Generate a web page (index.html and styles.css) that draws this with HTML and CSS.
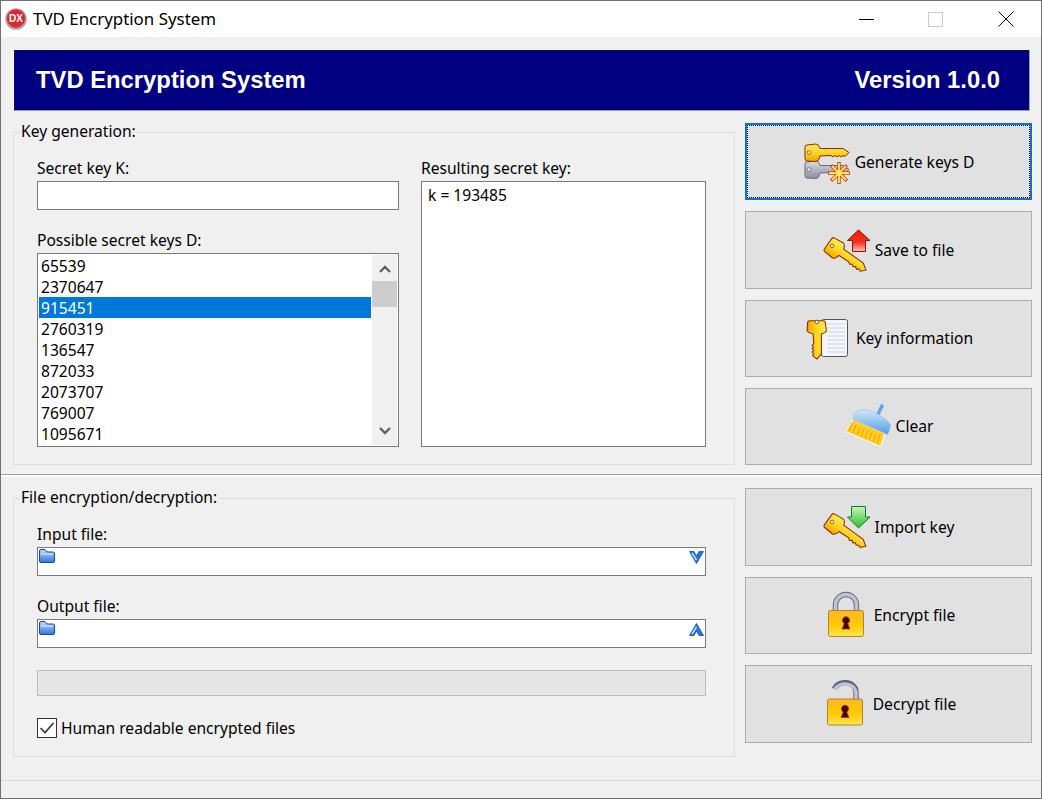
FILE: index.html
```html
<!DOCTYPE html>
<html lang="en">
<head>
  <meta charset="UTF-8" />
  <title>TVD Encryption System</title>
  <link rel="stylesheet" href="styles.css">
</head>
<body>
  <svg class="defs" aria-hidden="true">
    <defs>
      <linearGradient id="gold" x1="0" y1="0" x2="0" y2="1">
        <stop offset="0" stop-color="#ffec5c" />
        <stop offset="0.55" stop-color="#ffd21a" />
        <stop offset="1" stop-color="#f2a200" />
      </linearGradient>
      <linearGradient id="steel" x1="0" y1="0" x2="0" y2="1">
        <stop offset="0" stop-color="#dcdce4" />
        <stop offset="1" stop-color="#8c8c9c" />
      </linearGradient>
      <linearGradient id="red" x1="0" y1="0" x2="0" y2="1">
        <stop offset="0" stop-color="#ff1a00" />
        <stop offset="0.55" stop-color="#f03020" />
        <stop offset="1" stop-color="#ffc0b0" />
      </linearGradient>
      <linearGradient id="green" x1="0" y1="0" x2="0" y2="1">
        <stop offset="0" stop-color="#c8f4b8" />
        <stop offset="1" stop-color="#28c428" />
      </linearGradient>
      <linearGradient id="lockbody" x1="0" y1="0" x2="0" y2="1">
        <stop offset="0" stop-color="#fdb827" />
        <stop offset="0.55" stop-color="#ffc800" />
        <stop offset="1" stop-color="#ffe84a" />
      </linearGradient>
      <linearGradient id="brush" x1="0" y1="0" x2="0" y2="1">
        <stop offset="0" stop-color="#d4e9fb" />
        <stop offset="1" stop-color="#4f9ce6" />
      </linearGradient>
      <linearGradient id="folder" x1="0" y1="0" x2="0" y2="1">
        <stop offset="0" stop-color="#bcd8fa" />
        <stop offset="1" stop-color="#2f78e0" />
      </linearGradient>
      <path id="key" d="M2 9Q2 7 4 7L13 6Q16 6 17 10.5L40 10.5 46 14.5 42 18.5 40 17.5 38 19 36 17.5 34 19 32 17.5 30 19 28 17.5 17 18Q16 23.5 13 23.5L4 23Q2 23 2 20.5Z" />
      <g id="lock-body">
        <rect x="6.5" y="0.5" width="35" height="26" rx="2" fill="url(#lockbody)" stroke="#b5803c" />
        <path d="M22.3 13.5A3.6 3.6 0 1 1 25.7 13.5L28 19H20Z" fill="#3a0a00" stroke="#b03010" stroke-width="0.8" />
      </g>
    </defs>
  </svg>

  <div class="window">
    <div class="titlebar">
      <svg class="app-icon" width="22" height="22" viewBox="0 0 22 22">
        <circle cx="11" cy="11" r="10.8" fill="#a9a9a9" />
        <circle cx="11" cy="10.5" r="9.2" fill="#e0262e" />
        <text x="11" y="14" class="app-icon-text">DX</text>
      </svg>
      <span class="title">TVD Encryption System</span>
      <div class="controls">
        <div class="control"><span class="ctl-min"></span></div>
        <div class="control"><span class="ctl-max"></span></div>
        <div class="control">
          <svg width="16" height="16" viewBox="0 0 16 16"><path d="M0.5 0.5L15.5 15.5M15.5 0.5L0.5 15.5" stroke="#000" fill="none" /></svg>
        </div>
      </div>
    </div>

    <div class="banner">
      <span>TVD Encryption System</span>
      <span>Version 1.0.0</span>
    </div>

    <div class="section section-keys">
      <fieldset class="group group-keys">
        <legend>Key generation:</legend>
        <div class="key-cols">
          <div class="col-left">
            <label>Secret key K:</label>
            <div class="input"></div>
            <label class="next">Possible secret keys D:</label>
            <div class="listbox">
              <ul class="items">
                <li>65539</li>
                <li>2370647</li>
                <li class="selected">915451</li>
                <li>2760319</li>
                <li>136547</li>
                <li>872033</li>
                <li>2073707</li>
                <li>769007</li>
                <li>1095671</li>
              </ul>
              <div class="scrollbar">
                <svg class="sb-arrow" width="12" height="8" viewBox="0 0 12 8"><path d="M1 7L6 2 11 7" fill="none" stroke="#606060" stroke-width="2.4" /></svg>
                <div class="sb-thumb"></div>
                <svg class="sb-arrow sb-down" width="12" height="8" viewBox="0 0 12 8"><path d="M1 1L6 6 11 1" fill="none" stroke="#606060" stroke-width="2.4" /></svg>
              </div>
            </div>
          </div>
          <div class="col-right">
            <label>Resulting secret key:</label>
            <div class="memo">k = 193485</div>
          </div>
        </div>
      </fieldset>

      <div class="buttons">
        <button class="btn focused">
          <svg width="48" height="48" viewBox="0 0 48 48">
            <use href="#key" y="17" fill="url(#steel)" stroke="#6a6a78" />
            <circle cx="6" cy="31.5" r="1.8" fill="#eee" stroke="#666" stroke-width="0.7" />
            <use href="#key" fill="url(#gold)" stroke="#8a2c10" />
            <circle cx="6" cy="14.5" r="1.8" fill="#eee" stroke="#7a3a10" stroke-width="0.7" />
            <path d="M36 24V46M25 35H47M28.2 27.2L43.8 42.8M43.8 27.2L28.2 42.8" stroke="#d0401a" stroke-width="3.4" />
            <path d="M36 25V45M26 35H46M29 28L43 42M43 28L29 42" stroke="#ffe95a" stroke-width="1.8" />
          </svg>
          <span>Generate keys D</span>
        </button>
        <button class="btn">
          <svg width="48" height="48" viewBox="0 0 48 48">
            <path d="M35.5 4L47 14.5H42.5V25.5H29.5V14.5H24.5Z" fill="url(#red)" stroke="#8c1408" />
            <use href="#key" transform="translate(10.5 21) rotate(35.5) scale(1.05) translate(-8 -14.5)" fill="url(#gold)" stroke="#8a2c10" />
            <circle cx="9" cy="20" r="1.8" fill="#eee" stroke="#7a3a10" stroke-width="0.7" />
          </svg>
          <span>Save to file</span>
        </button>
        <button class="btn">
          <svg width="48" height="48" viewBox="0 0 48 48">
            <rect x="17.5" y="5.5" width="26" height="37" rx="2" fill="#f5f5fa" stroke="#555" />
            <path d="M23 10H41M23 14H41M23 18H41M23 22H41M23 26H41M23 30H41M23 34H41M23 38H41" stroke="#c9d3e8" />
            <use href="#key" transform="translate(13 12) rotate(90) scale(0.87 1.1) translate(-8 -14.5)" fill="url(#gold)" stroke="#8a2c10" />
            <circle cx="13" cy="8" r="1.8" fill="#eee" stroke="#7a3a10" stroke-width="0.7" />
          </svg>
          <span>Key information</span>
        </button>
        <button class="btn">
          <svg width="48" height="48" viewBox="0 0 48 48">
            <path d="M9.5 17.5L41 31.5 36.5 44.5 1.5 29.5Z" fill="#ffcc22" stroke="#fff" />
            <path d="M8 21L5 29M12 23L9 31M16 25L13 33M20 27L17 35M24 28L21 37M28 30L25 38M32 32L29 40M36 33L33 42" stroke="#eda600" />
            <path d="M33 14L38 4" stroke="#5fa6e6" stroke-width="3.6" stroke-linecap="round" />
            <path d="M9.5 12.5Q14 8 19.5 7.5Q27 8 34.5 12.5Q43 17 46.5 22.5Q46 29 43.5 32.5L9.5 17.5Z" fill="url(#brush)" stroke="#8dbbe8" stroke-width="0.6" />
          </svg>
          <span>Clear</span>
        </button>
      </div>
    </div>

    <div class="section section-files">
      <fieldset class="group group-files">
        <legend>File encryption/decryption:</legend>
        <label>Input file:</label>
        <div class="input file-input">
          <svg width="16" height="14" viewBox="0 0 16 14"><path d="M0.5 12V2Q0.5 0.5 2 0.5H6L8 3H14Q15.5 3 15.5 5V12Q15.5 13.5 14 13.5H2Q0.5 13.5 0.5 12Z" fill="url(#folder)" stroke="#164a9c" /><path d="M2 5H14" stroke="#e8f2ff" /></svg>
          <svg width="15" height="13" viewBox="0 0 15 13"><path d="M0.5 0.5H5L7.5 5 10 0.5H14.5L7.5 12.5Z" fill="#1f74ec" stroke="#174fa8" stroke-width="0.8" /><path d="M3 2L7.5 9" stroke="#cfe4ff" stroke-width="1.4" /></svg>
        </div>
        <label class="next">Output file:</label>
        <div class="input file-input">
          <svg width="16" height="14" viewBox="0 0 16 14"><path d="M0.5 12V2Q0.5 0.5 2 0.5H6L8 3H14Q15.5 3 15.5 5V12Q15.5 13.5 14 13.5H2Q0.5 13.5 0.5 12Z" fill="url(#folder)" stroke="#164a9c" /><path d="M2 5H14" stroke="#e8f2ff" /></svg>
          <svg width="15" height="13" viewBox="0 0 15 13"><path d="M7.5 0.5L14.5 12.5H10L7.5 8 5 12.5H0.5Z" fill="#1f74ec" stroke="#174fa8" stroke-width="0.8" /><path d="M3 11L7.5 4" stroke="#cfe4ff" stroke-width="1.4" /></svg>
        </div>
        <div class="progress"></div>
        <div class="check-row">
          <span class="checkbox">
            <svg width="16" height="14" viewBox="0 0 16 14"><path d="M1.5 7L6 11.5 14.5 2" fill="none" stroke="#333" stroke-width="1.6" /></svg>
          </span>
          <span>Human readable encrypted files</span>
        </div>
      </fieldset>

      <div class="buttons buttons-files">
        <button class="btn">
          <svg width="48" height="48" viewBox="0 0 48 48">
            <path d="M35.5 25L47 14H42.5V3.5H28.5V14H24.5Z" fill="url(#green)" stroke="#0e7a2a" />
            <use href="#key" transform="translate(10.5 20) rotate(36) scale(1.05) translate(-8 -14.5)" fill="url(#gold)" stroke="#8a2c10" />
            <circle cx="9" cy="19" r="1.8" fill="#eee" stroke="#7a3a10" stroke-width="0.7" />
          </svg>
          <span>Import key</span>
        </button>
        <button class="btn">
          <svg width="48" height="48" viewBox="0 0 48 48">
            <path d="M13.5 20V14A10.5 10.5 0 0 1 34.5 14V20" fill="none" stroke="#62627a" stroke-width="5.4" />
            <path d="M13.5 20V14A10.5 10.5 0 0 1 34.5 14V20" fill="none" stroke="#c2c2d2" stroke-width="3.6" />
            <use href="#lock-body" y="19" />
          </svg>
          <span>Encrypt file</span>
        </button>
        <button class="btn">
          <svg width="48" height="48" viewBox="0 0 48 48">
            <path d="M35 19V12A11 9 0 0 0 13.5 9" fill="none" stroke="#62627a" stroke-width="5.4" />
            <path d="M35 19V12A11 9 0 0 0 14 9.5" fill="none" stroke="#c2c2d2" stroke-width="3.6" />
            <use href="#lock-body" y="18.5" />
          </svg>
          <span>Decrypt file</span>
        </button>
      </div>
    </div>

    <div class="statusbar"></div>
  </div>
</body>
</html>
```

FILE: styles.css
```css
* {
  box-sizing: border-box;
}

html, body {
  margin: 0;
  height: 800px;
  overflow: hidden;
}

body {
  background: #fff;
  font-family: "Noto Sans", sans-serif;
  font-size: 15.6px;
  color: #000;
}

.defs {
  display: block;
  width: 0;
  height: 0;
}

.window {
  display: flex;
  flex-direction: column;
  width: 1042px;
  height: 799px;
  background: #f0f0f0;
  border: 1px solid #707070;
}

/* TITLE BAR */
.titlebar {
  display: flex;
  align-items: center;
  height: 36px;
  background: #fff;
  padding-left: 4px;
}

.app-icon {
  margin-right: 6px;
}

.app-icon-text {
  font-family: "Liberation Sans", sans-serif;
  font-size: 10px;
  font-weight: bold;
  fill: #fff;
  text-anchor: middle;
}

.title {
  padding-bottom: 2px;
  font-size: 16.9px;
}

.controls {
  display: flex;
  margin-left: auto;
}

.control {
  display: flex;
  align-items: center;
  justify-content: center;
  width: 70px;
  height: 36px;
}

.ctl-min {
  width: 15px;
  height: 1px;
  background: #000;
}

.ctl-max {
  width: 15px;
  height: 15px;
  margin-right: 2px;
  border: 1px solid #ccc;
}

/* BANNER */
.banner {
  display: flex;
  align-items: center;
  justify-content: space-between;
  height: 62px;
  margin: 12px 11px 0 12px;
  padding: 0 29px 0 22px;
  background: #000080;
  border: 1px solid #000080;
  border-top-color: #fff;
  border-left-color: #fff;
  border-right-color: #a0a0a0;
  border-bottom-color: #a0a0a0;
  color: #fff;
  font-family: "Liberation Sans", sans-serif;
  font-size: 23.8px;
  font-weight: bold;
}

/* SECTIONS */
.section {
  display: grid;
  grid-template-columns: 722px 287px;
  column-gap: 10px;
  padding-left: 12px;
}

.section-keys {
  padding-top: 12px;
  height: 366px;
  padding-bottom: 10px;
  border-bottom: 2px solid #fff;
  box-shadow: inset 0 -1px 0 #a0a0a0;
}

.section-files {
  padding-top: 11px;
  align-items: start;
}

.group {
  margin: 0;
  min-width: 0;
  padding: 17px 0 0 23px;
  border: 1px solid #dcdcdc;
}

.group legend {
  margin-left: -17px;
  padding: 0 1px 1px 1px;
  line-height: 17px;
}

.group-keys {
  height: 342px;
}

.group-files {
  height: 268px;
  margin-top: 1px;
  padding-right: 28px;
}

label {
  display: block;
  height: 20px;
  line-height: 20px;
  margin-bottom: 3px;
}

label.next {
  margin-top: 20px;
}

.key-cols {
  display: flex;
  gap: 22px;
}

.col-left {
  width: 362px;
}

.col-right {
  width: 285px;
}

.input {
  height: 29px;
  background: #fff;
  border: 1px solid #7a7a7a;
}

.file-input {
  display: flex;
  justify-content: space-between;
  align-items: flex-start;
  padding: 1px 1px 0 1px;
}

.file-input svg:last-child {
  margin-top: 2px;
}

.memo {
  height: 266px;
  padding: 2px 6px;
  background: #fff;
  border: 1px solid #7a7a7a;
}

/* LIST */
.listbox {
  display: flex;
  height: 194px;
  background: #fff;
  border: 1px solid #7a7a7a;
  padding: 1px;
}

.items {
  flex: 1;
  list-style: none;
  margin: 0 1px 0 0;
  padding: 0;
}

.items li {
  height: 21px;
  line-height: 23px;
  padding-left: 2px;
}

.items li.selected {
  background: #0078d7;
  color: #fff;
}

.scrollbar {
  display: flex;
  flex-direction: column;
  align-items: center;
  width: 25px;
  background: #f0f0f0;
}

.sb-arrow {
  margin-top: 10px;
  height: 8px;
}

.sb-thumb {
  width: 100%;
  height: 26px;
  margin-top: 8px;
  background: #cdcdcd;
}

.sb-down {
  margin-top: auto;
  margin-bottom: 10px;
}

/* PROGRESS AND CHECKBOX */
.progress {
  height: 26px;
  margin-top: 22px;
  background: #e6e6e6;
  border: 1px solid #bcbcbc;
}

.check-row {
  display: flex;
  align-items: center;
  gap: 4px;
  height: 20px;
  margin-top: 22px;
}

.checkbox {
  display: flex;
  align-items: center;
  justify-content: center;
  width: 20px;
  height: 20px;
  background: #fff;
  border: 1px solid #333;
}

/* BUTTONS */
.buttons {
  display: grid;
  grid-auto-rows: 1fr;
  row-gap: 11px;
}

.buttons-files {
  height: 255px;
}

.btn {
  display: flex;
  align-items: center;
  justify-content: center;
  gap: 4px;
  padding: 0;
  background: #e1e1e1;
  border: 1px solid #adadad;
  font: inherit;
  color: #000;
}

.btn.focused {
  border: 2px solid #0078d7;
  outline: 1px dotted #000;
  outline-offset: -3px;
}

/* STATUS BAR */
.statusbar {
  flex: 1;
  margin-top: 23px;
  border-top: 1px solid #d9d9d9;
}
```
